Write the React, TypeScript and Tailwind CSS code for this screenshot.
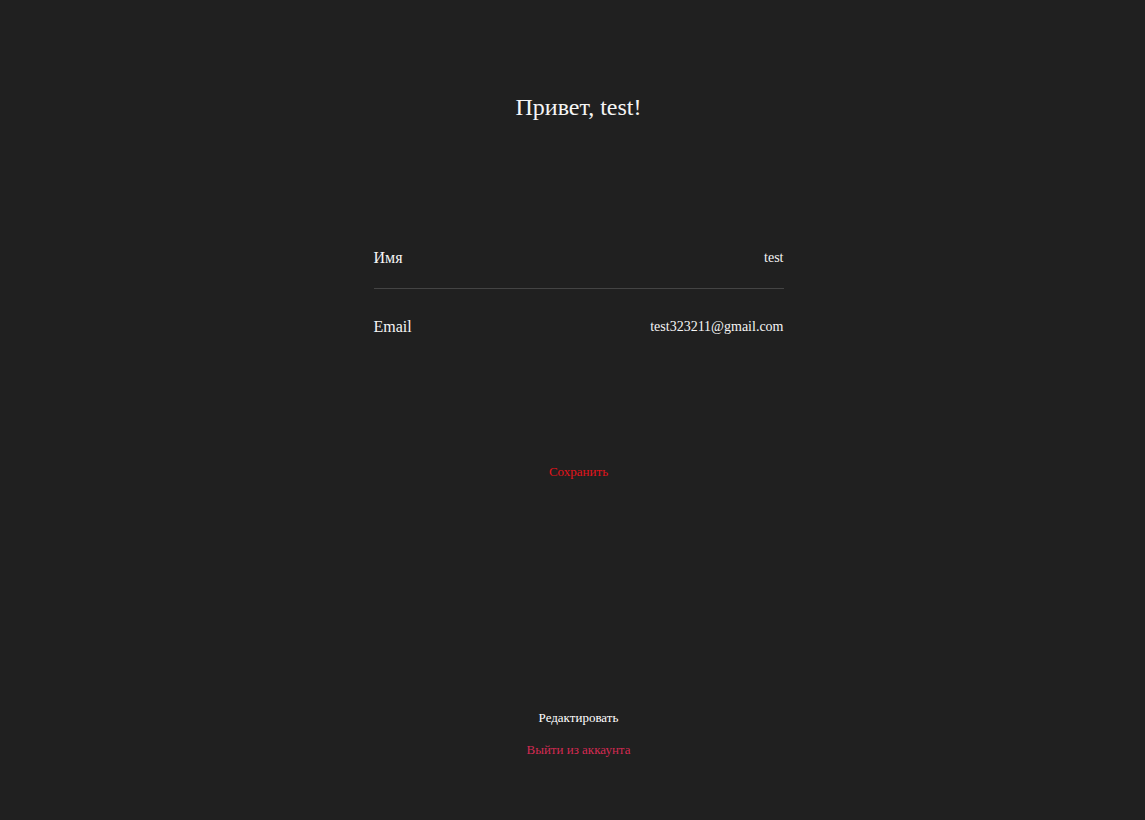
export default function App() {
  return (
    <div className="min-h-[820px] w-full bg-[#202020] text-[#f5f5f5] flex flex-col items-center pl-[12px]" style={{ fontFamily: '"Liberation Serif", serif' }}>
      <h1 className="mt-[93px] text-[24px] leading-[28px] font-normal">Привет, test!</h1>
      <div className="mt-[127px] w-[410px] flex flex-col">
        <div className="flex justify-between items-center h-[20px] leading-[20px]">
          <span className="text-[16px]">Имя</span>
          <span className="text-[14px]">test</span>
        </div>
        <div className="mt-[20px] h-px bg-[#444444]" />
        <div className="mt-[28px] flex justify-between items-center h-[20px] leading-[20px]">
          <span className="text-[16px]">Email</span>
          <span className="text-[14px]">test323211@gmail.com</span>
        </div>
      </div>
      <button className="mt-[127px] text-[13px] leading-[16px] text-[#e3131b]">Сохранить</button>
      <button className="mt-[230px] text-[13px] leading-[16px] text-white">Редактировать</button>
      <button className="mt-[16px] text-[13px] leading-[16px] text-[#d42a52]">Выйти из аккаунта</button>
    </div>
  );
}
